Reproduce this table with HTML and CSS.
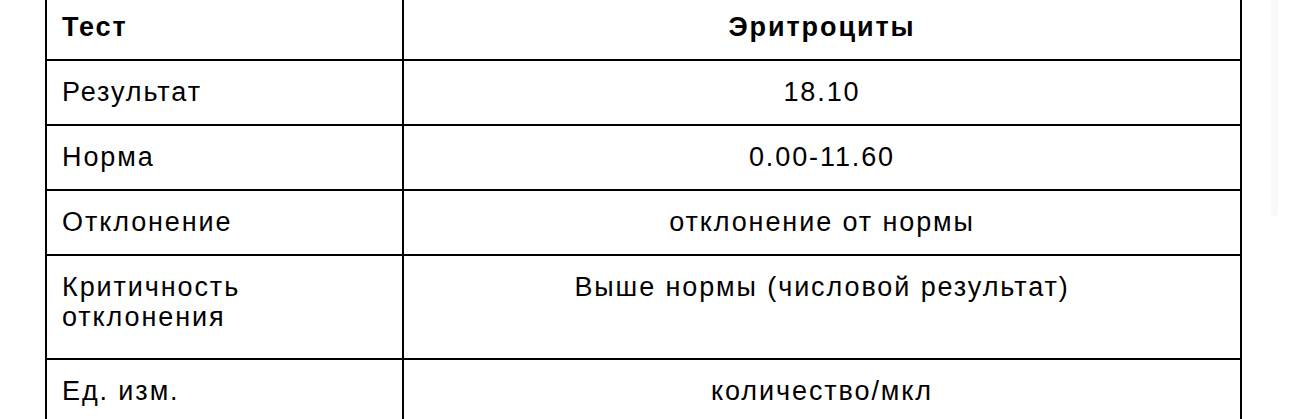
FILE: index.html
```html
<!DOCTYPE html>
<html lang="ru">
<head>
<meta charset="utf-8">
<title>Эритроциты</title>
<link rel="stylesheet" href="styles.css">
</head>
<body>
<div class="page">
  <table class="results">
    <colgroup>
      <col class="col-label">
      <col class="col-value">
    </colgroup>
    <tbody>
      <tr class="head">
        <td>Тест</td>
        <td class="value">Эритроциты</td>
      </tr>
      <tr>
        <td>Результат</td>
        <td class="value">18.10</td>
      </tr>
      <tr>
        <td>Норма</td>
        <td class="value">0.00-11.60</td>
      </tr>
      <tr>
        <td>Отклонение</td>
        <td class="value">отклонение от нормы</td>
      </tr>
      <tr class="tall">
        <td>Критичность<br>отклонения</td>
        <td class="value">Выше нормы (числовой результат)</td>
      </tr>
      <tr>
        <td>Ед. изм.</td>
        <td class="value">количество/мкл</td>
      </tr>
    </tbody>
  </table>
  <div class="scroll-track"></div>
</div>
</body>
</html>
```

FILE: styles.css
```css
html, body {
  margin: 0;
  padding: 0;
  background: #ffffff;
  overflow: hidden;
}

.page {
  font-family: "Liberation Sans", Arial, sans-serif;
  color: #000;
  padding-left: 45px;
}

.results {
  border-collapse: collapse;
  table-layout: fixed;
  width: 1197px;
  margin-top: -6px;
  font-size: 27px;
  line-height: 30px;
  letter-spacing: 1.9px;
}

.col-label {
  width: 357px;
}

.results td {
  border: 2px solid #000;
  padding: 16px 15px 17px 15px;
  vertical-align: top;
  text-align: left;
}

.results td.value {
  text-align: center;
}

.results tr.head td {
  font-weight: bold;
}

.results tr.tall td {
  padding-bottom: 26px;
}

.scroll-track {
  position: fixed;
  top: 0;
  left: 1271px;
  width: 7px;
  height: 217px;
  background: #f9f9f9;
  border-radius: 0 0 4px 4px;
}
```
